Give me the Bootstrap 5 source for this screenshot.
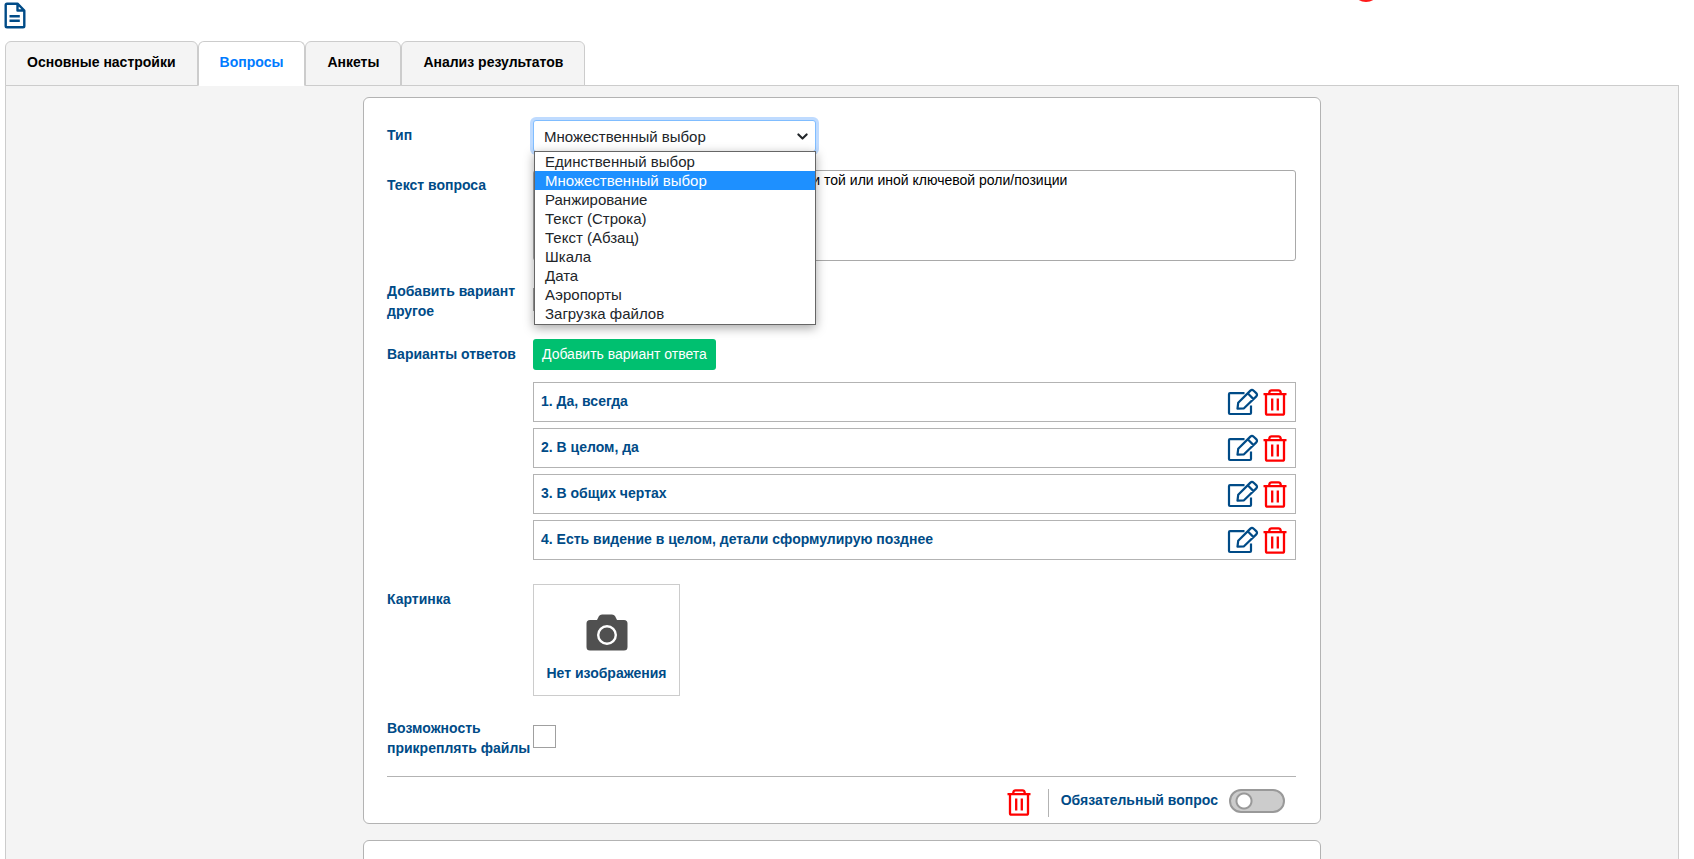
<!DOCTYPE html>
<html lang="ru">
<head>
<meta charset="utf-8">
<meta name="viewport" content="width=device-width, initial-scale=1">
<title>Вопросы</title>
<link href="https://cdn.jsdelivr.net/npm/bootstrap@5.3.0/dist/css/bootstrap.min.css" rel="stylesheet">
<style>
  :root { --navy: #004b87; --line: #b3b3b3; }
  body { font-family: "Liberation Sans", Arial, sans-serif; font-size: 14px; line-height: 20px; color: #000; background: #fff; }
  .topbar { height: 41px; padding: 2px 4px; }
  .alert-dot { width: 28px; height: 28px; top: -26px; left: 79.8%; background: #ff1a1a; }
  .page-tabs { margin-left: 5px; --bs-nav-tabs-border-width: 0; position: relative; z-index: 1; }
  .page-tabs .nav-link { height: 45px; padding: 0 21px 4px; margin: 0 0 -1px; border: 1px solid #ccc; border-radius: 6px 6px 0 0; background: #f4f4f4; color: #000; font-weight: 700; }
  .page-tabs .nav-link.active { color: #007bff; background: #fff; border-color: #ccc #ccc #fff; }
  .panel { margin: 0 15px 0 5px; padding-top: 11px; border: 1px solid #ccc; border-bottom: 0; background: #f4f4f4; }
  .question { max-width: 958px; padding: 22px 24px 0 23px; margin-bottom: 16px; border: 1px solid var(--line); border-radius: 6px; }
  .question-next { min-height: 200px; }
  .field-name { flex: 0 0 146px; color: var(--navy); font-weight: 700; padding-top: 5px; }
  .field-row { margin-bottom: 18px; }
  .type-box { width: 283px; max-width: 100%; }
  .type-box .form-select { height: 32px; padding: 0 30px 0 10px; font-size: 15px; line-height: 19px; color: #212529; border-color: #80bdff; border-radius: 3px; box-shadow: 0 0 0 3px #bfdbff; background-position: right 7px center; background-size: 11px 11px; background-image: url("data:image/svg+xml,%3csvg xmlns='http://www.w3.org/2000/svg' viewBox='0 0 16 16'%3e%3cpath fill='none' stroke='%23212529' stroke-width='3' stroke-linecap='round' stroke-linejoin='round' d='m2 5 6 6 6-6'/%3e%3c/svg%3e"); }
  .type-list { left: 1px; top: 31px; right: 0; z-index: 5; padding-bottom: 1px; border: 1px solid #666; background: #fff; box-shadow: 0 3px 10px rgba(0,0,0,.35); font-size: 15px; }
  .type-list button { display: block; width: 100%; border: 0; background: none; text-align: left; padding: 0 10px; line-height: 19px; color: #212529; }
  .type-list button.picked { background: #1e90ff; color: #fff; }
  .question-text { height: 91px; padding: 0 8px; border: 1px solid #a9a9a9; border-radius: 3px; font-size: 14px; line-height: 19px; color: #000; resize: none; }
  .form-check-input.tick { width: 23px; height: 23px; margin: 0; border: 1px solid #a0a0a0; border-radius: 0; }
  .btn-add { height: 31px; padding: 0 9px; border: 0; border-radius: 3px; background: #00c070; color: #fff; font-size: 14px; }
  .answers { gap: 6px; margin-top: 12px; }
  .answer { height: 40px; padding: 0 8px 0 7px; border: 1px solid var(--line); color: var(--navy); font-weight: 700; }
  .answer span { padding-bottom: 2px; }
  .icon-btn { border: 0; background: none; padding: 0; line-height: 0; }
  .picture { width: 147px; height: 112px; border: 1px solid #ccc; background: #fff; color: var(--navy); font-weight: 700; padding: 29px 0 0; }
  .footer-row { border-top: 1px solid var(--line); padding-top: 12px; height: 47px; }
  .divider { width: 1px; height: 28px; background: var(--line); margin: 0 12px 0 17px; }
  .required-name { color: var(--navy); font-weight: 700; padding-top: 1px; }
  .toggle.form-check-input { width: 56px; height: 24px; margin: 0 11px; border: 2px solid #999; border-radius: 12px; background: #ccc radial-gradient(circle at 15px 50%, #fff 6px, #999 7px, #999 8px, transparent 9px) no-repeat; background-size: 100% 100%; background-origin: border-box; }
</style>
</head>
<body class="vh-100 overflow-hidden d-flex flex-column position-relative">
<svg class="d-none">
  <symbol id="trash" viewBox="0 0 24 27"><g fill="none" stroke="red" stroke-width="2.3"><path d="M0.5 5.2H23.5M6.3 5V3.6Q6.6 1.3 8.6 1.3H15.4Q17.4 1.3 17.7 3.6V5"/><path d="M3 5.2V24.2Q3 25.7 4.5 25.7H19.5Q21 25.7 21 24.2V5.2M9.2 9.5V21.5M14.8 9.5V21.5"/></g></symbol>
  <symbol id="edit" viewBox="0 0 32 28"><g fill="none" stroke="#004b87" stroke-width="2.2" stroke-linejoin="round"><path d="M17.5 5.2H3Q2 5.2 2 6.2V25Q2 26 3 26H23Q24 26 24 25V17.5"/><path d="M10.5 20.7L11.2 14.8L23.4 2.6Q25 1.2 26.7 2.7L29.2 5.1Q30.7 6.7 29.3 8.4L17 20.3ZM20.7 5.3L26.5 11.1"/></g></symbol>
</svg>

<header class="topbar flex-shrink-0">
  <a href="#" aria-label="Документ" class="d-block"><svg class="d-block" width="22" height="27" viewBox="0 0 22 27" fill="none" stroke="#004b87" stroke-width="2.4" stroke-linejoin="round"><path d="M13.5 1.7H3Q1.7 1.7 1.7 3V24Q1.7 25.3 3 25.3H19Q20.3 25.3 20.3 24V8.5ZM13.5 1.7V8.5H20.3M5.5 14.2H15.8M5.5 18.8H15.8"/></svg></a>
  <span class="alert-dot rounded-circle position-absolute"></span>
</header>

<ul class="nav nav-tabs page-tabs flex-shrink-0">
  <li class="nav-item"><a class="nav-link d-flex align-items-center" href="#">Основные настройки</a></li>
  <li class="nav-item"><a class="nav-link d-flex align-items-center active" aria-current="page" href="#">Вопросы</a></li>
  <li class="nav-item"><a class="nav-link d-flex align-items-center" href="#">Анкеты</a></li>
  <li class="nav-item"><a class="nav-link d-flex align-items-center" href="#">Анализ результатов</a></li>
</ul>

<main class="panel flex-grow-1 overflow-hidden">
  <form class="question bg-white mx-auto">
    <div class="d-flex field-row">
      <label class="field-name" for="type">Тип</label>
      <div class="type-box position-relative">
        <select id="type" class="form-select">
          <option>Единственный выбор</option><option selected>Множественный выбор</option><option>Ранжирование</option>
        </select>
        <div class="type-list position-absolute" role="listbox" aria-label="Тип">
          <button type="button" role="option">Единственный выбор</button>
          <button type="button" role="option" class="picked" aria-selected="true">Множественный выбор</button>
          <button type="button" role="option">Ранжирование</button>
          <button type="button" role="option">Текст (Строка)</button>
          <button type="button" role="option">Текст (Абзац)</button>
          <button type="button" role="option">Шкала</button>
          <button type="button" role="option">Дата</button>
          <button type="button" role="option">Аэропорты</button>
          <button type="button" role="option">Загрузка файлов</button>
        </div>
      </div>
    </div>

    <div class="d-flex mb-3">
      <label class="field-name" for="text">Текст вопроса</label>
      <textarea id="text" class="question-text flex-grow-1">Понимаете ли Вы основные цели и задачи той или иной ключевой роли/позиции</textarea>
    </div>

    <div class="d-flex field-row">
      <label class="field-name pt-1" for="other">Добавить вариант другое</label>
      <input id="other" type="checkbox" class="form-check-input tick align-self-center">
    </div>

    <div class="d-flex mb-4">
      <div class="field-name">Варианты ответов</div>
      <div class="flex-grow-1">
        <button type="button" class="btn btn-add">Добавить вариант ответа</button>
        <div class="answers d-flex flex-column">
          <div class="answer d-flex align-items-center"><span class="me-auto">1. Да, всегда</span><button type="button" class="icon-btn me-1" aria-label="Изменить"><svg width="32" height="28"><use href="#edit"/></svg></button><button type="button" class="icon-btn" aria-label="Удалить"><svg width="24" height="27"><use href="#trash"/></svg></button></div>
          <div class="answer d-flex align-items-center"><span class="me-auto">2. В целом, да</span><button type="button" class="icon-btn me-1" aria-label="Изменить"><svg width="32" height="28"><use href="#edit"/></svg></button><button type="button" class="icon-btn" aria-label="Удалить"><svg width="24" height="27"><use href="#trash"/></svg></button></div>
          <div class="answer d-flex align-items-center"><span class="me-auto">3. В общих чертах</span><button type="button" class="icon-btn me-1" aria-label="Изменить"><svg width="32" height="28"><use href="#edit"/></svg></button><button type="button" class="icon-btn" aria-label="Удалить"><svg width="24" height="27"><use href="#trash"/></svg></button></div>
          <div class="answer d-flex align-items-center"><span class="me-auto">4. Есть видение в целом, детали сформулирую позднее</span><button type="button" class="icon-btn me-1" aria-label="Изменить"><svg width="32" height="28"><use href="#edit"/></svg></button><button type="button" class="icon-btn" aria-label="Удалить"><svg width="24" height="27"><use href="#trash"/></svg></button></div>
        </div>
      </div>
    </div>

    <div class="d-flex field-row">
      <div class="field-name">Картинка</div>
      <button type="button" class="picture d-flex flex-column align-items-center">
        <svg width="42" height="37" viewBox="0 0 42 37"><path fill="#505050" d="M4 6H11L13 2Q14 0.5 16 0.5H26Q28 .5 29 2L31 6H38Q41.5 6 41.5 9.5V33Q41.5 36.5 38 36.5H4Q.5 36.5 .5 33V9.5Q.5 6 4 6Z"/><circle cx="21" cy="21" r="8.8" fill="none" stroke="#fff" stroke-width="2.4"/></svg>
        <span class="mt-2 pt-1">Нет изображения</span>
      </button>
    </div>

    <div class="d-flex field-row">
      <label class="field-name pt-1" for="files">Возможность прикреплять файлы</label>
      <input id="files" type="checkbox" class="form-check-input tick align-self-center">
    </div>

    <div class="footer-row d-flex justify-content-end">
      <button type="button" class="icon-btn align-self-start" aria-label="Удалить вопрос"><svg width="24" height="27"><use href="#trash"/></svg></button>
      <span class="divider"></span>
      <label class="required-name text-nowrap" for="required">Обязательный вопрос</label>
      <input id="required" type="checkbox" class="form-check-input toggle">
    </div>
  </form>
  <section class="question question-next bg-white mx-auto"></section>
</main>
<script src="https://cdn.jsdelivr.net/npm/bootstrap@5.3.0/dist/js/bootstrap.bundle.min.js"></script>
</body>
</html>
